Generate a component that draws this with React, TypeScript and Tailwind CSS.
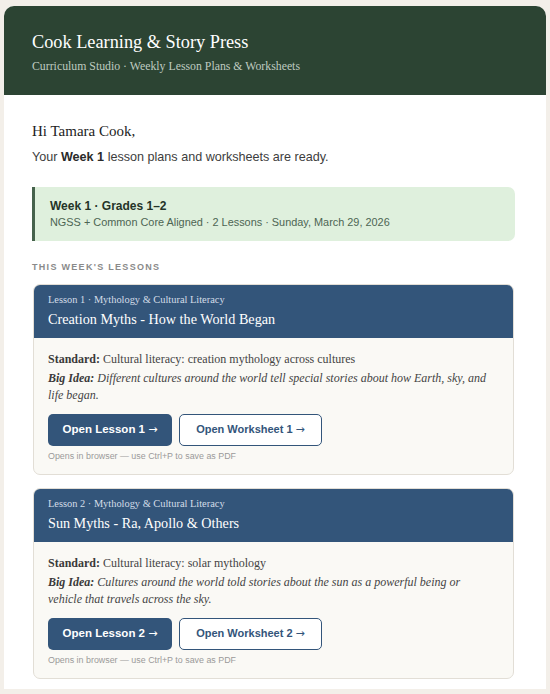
import React from 'react';

const lessons = [
  {
    num: 1,
    tag: 'Lesson 1 · Mythology & Cultural Literacy',
    title: 'Creation Myths - How the World Began',
    standard: 'Cultural literacy: creation mythology across cultures',
    idea: 'Different cultures around the world tell special stories about how Earth, sky, and life began.',
  },
  {
    num: 2,
    tag: 'Lesson 2 · Mythology & Cultural Literacy',
    title: 'Sun Myths - Ra, Apollo & Others',
    standard: 'Cultural literacy: solar mythology',
    idea: 'Cultures around the world told stories about the sun as a powerful being or vehicle that travels across the sky.',
  },
];

const serif = "font-['Liberation_Serif',Georgia,serif]";
const sans = "font-['Liberation_Sans',Arial,sans-serif]";

function Arrow() {
  return <span className="font-['DejaVu_Sans',sans-serif] font-normal text-[11px]">→</span>;
}

export default function App() {
  return (
    <div className="min-h-[694px] bg-[#f3efe9] px-[4px] pt-[6px]">
      <div className="rounded-t-[10px] overflow-hidden bg-white">
        {/* Header */}
        <div className="bg-[#2c4433] px-[28px] pt-[24px] pb-[21px]">
          <h1 className={`${serif} text-[18.3px] leading-[24px] text-white`}>Cook Learning &amp; Story Press</h1>
          <p className={`${serif} text-[11.8px] leading-[16px] mt-[4px] text-[#bfcbc0]`}>
            Curriculum Studio · Weekly Lesson Plans &amp; Worksheets
          </p>
        </div>

        {/* Body */}
        <div className="pl-[28px] pr-[31px] pt-[26px] pb-[10px]">
          <p className={`${serif} text-[15px] leading-[20px] text-[#222]`}>Hi Tamara Cook,</p>
          <p className={`${sans} text-[12.6px] leading-[18px] mt-[7px] text-[#3d3d3d]`}>
            Your <b className="text-[#2a2a2a]">Week 1</b> lesson plans and worksheets are ready.
          </p>

          <div className="mt-[21px] rounded-r-[7px] border-l-[3px] border-[#46624c] bg-[#dff0dd] px-[15px] py-[11px]">
            <p className={`${sans} text-[12px] leading-[16px] font-bold text-[#243428]`}>Week 1 · Grades 1–2</p>
            <p className={`${sans} text-[10.9px] leading-[16px] text-[#4d6553]`}>
              NGSS + Common Core Aligned · 2 Lessons · Sunday, March 29, 2026
            </p>
          </div>

          <p className={`${sans} mt-[20px] text-[9px] leading-[12px] font-bold tracking-[1.3px] text-[#8a8a8a]`}>
            THIS WEEK'S LESSONS
          </p>

          <div className="mt-[11px] flex flex-col gap-[13px]">
            {lessons.map((l) => (
              <div key={l.num} className="mx-[1px] overflow-hidden rounded-[7px] border border-[#e2ded6] bg-[#faf9f5]">
                <div className="bg-[#33557a] px-[14px] pt-[8px] pb-[9px]">
                  <p className={`${serif} text-[10.4px] leading-[14px] text-[#d4dde8]`}>{l.tag}</p>
                  <p className={`${serif} text-[14.2px] leading-[20px] mt-[2px] text-white`}>{l.title}</p>
                </div>
                <div className="px-[14px] pt-[12px] pb-[12px]">
                  <p className={`${serif} text-[12px] leading-[18px] text-[#444]`}>
                    <b className="text-[#3a3a3a]">Standard:</b> {l.standard}
                  </p>
                  <p className={`${serif} text-[12px] leading-[17px] mt-[2px] italic text-[#444] pr-[4px]`}>
                    <b className="text-[#3a3a3a]">Big Idea:</b> {l.idea}
                  </p>
                  <div className="mt-[10px] flex gap-[7px]">
                    <button className={`${sans} h-[32px] w-[124px] rounded-[5px] bg-[#33557a] text-[11.5px] font-bold text-white`}>
                      Open Lesson {l.num} <Arrow />
                    </button>
                    <button className={`${sans} h-[32px] w-[143px] rounded-[5px] border border-[#33557a] bg-white text-[11px] font-bold text-[#33557a]`}>
                      Open Worksheet {l.num} <Arrow />
                    </button>
                  </div>
                  <p className={`${sans} mt-[4px] text-[8.9px] leading-[12px] text-[#9a9a9a]`}>
                    Opens in browser — use Ctrl+P to save as PDF
                  </p>
                </div>
              </div>
            ))}
          </div>
        </div>
      </div>
    </div>
  );
}
